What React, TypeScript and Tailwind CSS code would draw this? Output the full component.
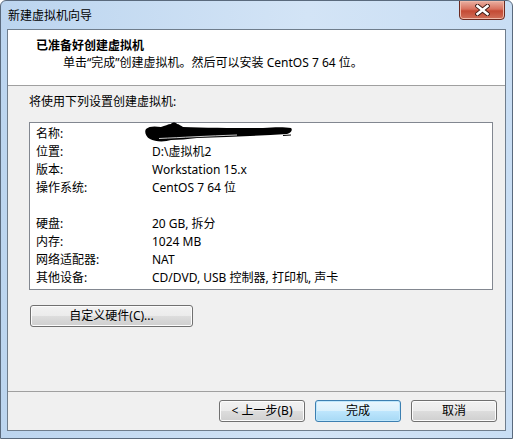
import React from "react";

const rows: [string, string][] = [
  ["名称:", ""],
  ["位置:", "D:\\虚拟机2"],
  ["版本:", "Workstation 15.x"],
  ["操作系统:", "CentOS 7 64 位"],
  ["", ""],
  ["硬盘:", "20 GB, 拆分"],
  ["内存:", "1024 MB"],
  ["网络适配器:", "NAT"],
  ["其他设备:", "CD/DVD, USB 控制器, 打印机, 声卡"],
];

const Scribble = () => (
  <svg width="150" height="21" viewBox="0 0 150 21" className="-ml-[7px] -mt-[4px] block">
    <path
      d="M1 7 C4 4 10 4 16 5 C20 4 23 2 26 2 C27 0 31 0 32 2 C34 2 36 4 38 5 C60 6 90 6 118 6 C130 5 140 5 146 6 C148 8 146 11 142 12 C112 14 82 15 52 16 C42 17 34 18 26 18 C20 20 10 20 5 17 C1 15 -1 10 1 7 Z"
      fill="#000"
    />
    <path d="M14 16.5 C36 15.5 62 14 92 13" stroke="#fff" strokeWidth="0.8" fill="none" />
    <path d="M138 13.5 L146 13" stroke="#000" strokeWidth="1" />
  </svg>
);

const WinButton = ({ label, primary, className }: { label: React.ReactNode; primary?: boolean; className?: string }) => (
  <div
    className={`h-[22px] rounded-[3px] border flex items-center justify-center text-[12px] text-black ${
      primary
        ? "border-[#3c7fb1] bg-[linear-gradient(#eaf6fd_0%,#d9f0fc_50%,#bee6fd_50%,#a7d9f5_100%)] shadow-[inset_0_0_0_1px_#bfe7fc]"
        : "border-[#707070] bg-[linear-gradient(#f2f2f2_0%,#ebebeb_50%,#dddddd_50%,#cfcfcf_100%)] shadow-[inset_0_0_0_1px_#fcfcfc]"
    } ${className ?? ""}`}
  >
    {label}
  </div>
);

export default function App() {
  return (
    <div
      className="w-[513px] h-[439px] flex flex-col rounded-t-[6px] border border-[#5a6a7d] bg-[linear-gradient(90deg,#bcd5ef,#d3e4f6_60%,#c9def4)] overflow-hidden"
      style={{ fontFamily: '"Noto Sans", "Noto Sans CJK SC", sans-serif' }}
    >
      {/* title bar */}
      <div className="h-[28px] flex items-start justify-between">
        <div className="pl-[7px] pt-[7px] text-[12px] leading-[16px] text-black">新建虚拟机向导</div>
        <div className="mr-[7px] -mt-px w-[46px] h-[20px] rounded-b-[4px] border border-[#6b2a20] bg-[linear-gradient(#eab0a2_0%,#d8715e_45%,#c44a34_55%,#d0705a_100%)] shadow-[inset_0_0_0_1px_#f0b8a8] flex items-center justify-center">
          <svg width="15" height="12" viewBox="0 0 15 12">
            <path d="M2.5 2 L12.5 10 M12.5 2 L2.5 10" stroke="#3d1a14" strokeWidth="4.4" strokeLinecap="square" />
            <path d="M2.5 2 L12.5 10 M12.5 2 L2.5 10" stroke="#fff" strokeWidth="2.6" strokeLinecap="square" />
          </svg>
        </div>
      </div>

      {/* client */}
      <div className="mx-[6px] flex-1 flex flex-col border border-[#6f7d8c] bg-[#f0f0f0]">
        <div className="h-[56px] bg-white border-b border-[#a0a0a0] pt-[7px] text-[12px] leading-[17px] text-black">
          <div className="pl-[28px] font-bold">已准备好创建虚拟机</div>
          <div className="pl-[55px]">单击“完成”创建虚拟机。然后可以安装 CentOS 7 64 位。</div>
        </div>

        <div className="flex-1 flex flex-col pl-[21px] pt-[8px] text-[12px] leading-[16px] text-black">
          <div>将使用下列设置创建虚拟机:</div>
          <div className="mt-[12px] w-[464px] h-[168px] border border-[#828790] bg-white pt-[2px] pl-[6px]">
            {rows.map(([k, v], i) => (
              <div key={i} className="h-[18px] flex items-center">
                <div className="w-[116px]">{k}</div>
                <div>{i === 0 ? <Scribble /> : v}</div>
              </div>
            ))}
          </div>
          <WinButton label="自定义硬件(C)..." className="mt-[15px] ml-px w-[163px]" />
        </div>

        <div className="h-[39px] border-t border-[#a0a0a0] flex justify-end items-start gap-[10px] pt-[8px] pr-[8px]">
          <WinButton label="< 上一步(B)" className="w-[86px]" />
          <WinButton label="完成" primary className="w-[86px]" />
          <WinButton label="取消" className="w-[86px]" />
        </div>
      </div>
      <div className="h-[7px]" />
    </div>
  );
}
